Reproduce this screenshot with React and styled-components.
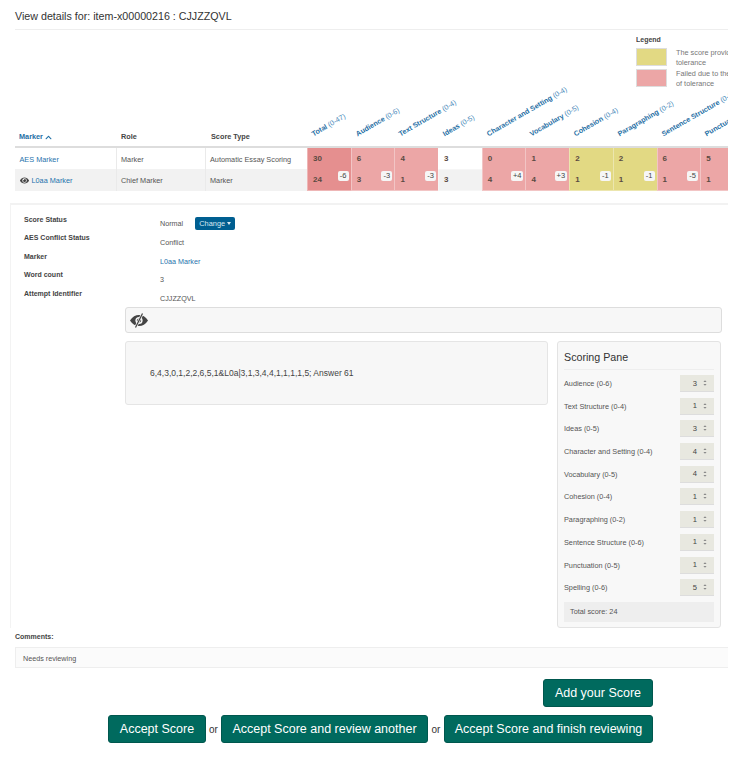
import React from 'react';
import styled, { createGlobalStyle } from 'styled-components';
import { FaEye, FaChevronUp } from 'react-icons/fa';

const Global = createGlobalStyle`
  html, body { margin: 0; padding: 0; background: #fff; }
  body { font-family: "Liberation Sans", Arial, sans-serif; color: #444; }
  * { box-sizing: border-box; }
`;

const colTemplate = '101px 89px 102px repeat(11, 43.7px)';

const Page = styled.div`
  width: 728px;
  height: 757px;
  overflow: hidden;
  padding-top: 10px;
`;
const Title = styled.h1`
  margin: 0 0 0 15px;
  height: 20px;
  font-size: 10.7px;
  line-height: 13px;
  font-weight: 400;
  color: #333;
  border-bottom: 1px solid #eee;
`;
const TableWrap = styled.div`
  margin-left: 15px;
  width: 713px;
  height: 118px;
  display: flex;
  justify-content: flex-end;
  padding-top: 5px;
  position: relative;
`;
const Legend = styled.div`
  width: 92px;
  flex: none;
  overflow: hidden;
  font-size: 7.3px;
  line-height: 10.4px;
  color: #777;
`;
const LegendTitle = styled.div`
  font-weight: 700;
  font-size: 7px;
  color: #444;
  height: 13px;
  line-height: 9px;
`;
const LegendRow = styled.div`
  display: flex;
  gap: 9px;
  height: 21px;
  width: 200px;
`;
const Swatch = styled.div`
  width: 31px;
  height: 18px;
  flex: none;
  background: ${p => p.$c};
  border: 1px solid #ddd;
`;
const HeadRow = styled.div`
  position: absolute;
  left: 0;
  right: 0;
  top: 89px;
  height: 29px;
  display: grid;
  grid-template-columns: ${colTemplate};
  border-bottom: 2px solid #ddd;
`;
const HeadText = styled.div`
  font-size: 7.3px;
  font-weight: 700;
  color: ${p => p.$link ? '#1f6fa5' : '#444'};
  padding: 9px 0 0 ${p => p.$pad || 4}px;
  display: flex;
  align-items: center;
  gap: 2px;
  height: 27px;
  line-height: 10px;
`;
const RotCell = styled.div`
  position: relative;
`;
const RotLabel = styled.span`
  position: absolute;
  left: 8px;
  bottom: 7px;
  white-space: nowrap;
  font-size: 7.15px;
  line-height: 10px;
  font-weight: 700;
  color: #1f6fa5;
  transform: rotate(-30deg);
  transform-origin: left bottom;
  em { font-style: normal; font-weight: 400; color: #3f86b8; }
`;
const Row = styled.div`
  margin-left: 15px;
  width: 760px;
  height: ${p => p.$alt ? 22 : 21}px;
  display: grid;
  grid-template-columns: ${colTemplate};
  background: ${p => p.$alt ? '#f2f2f2' : '#fff'};
`;
const Cell = styled.div`
  position: relative;
  font-size: 7.3px;
  padding-left: ${p => p.$first ? 4.5 : 4}px;
  color: #555;
  white-space: nowrap;
  border-left: ${p => p.$first ? 'none' : '1px solid #eaeaea'};
  display: flex;
  align-items: center;
  gap: 3px;
`;
const LinkText = styled.span`
  color: #1f73ad;
`;
const Score = styled.div`
  position: relative;
  background: ${p => ({ strong: '#e58f8f', red: '#eca6a6', yellow: '#e2d983' }[p.$tone] || 'transparent')};
  border-left: 1px solid rgba(255,255,255,.35);
  border-bottom: 1px solid rgba(255,255,255,.35);
  font-size: 8px;
  font-weight: 700;
  color: #5a4a42;
  padding-left: 5px;
  line-height: 21px;
`;
const Badge = styled.span`
  position: absolute;
  top: 2px;
  right: 2px;
  min-width: 11px;
  height: 10px;
  padding: 0 2px;
  background: #f6f6f6;
  border-radius: 2px;
  font-size: 7.5px;
  line-height: 10px;
  font-weight: 400;
  text-align: center;
  color: #444;
`;
const Details = styled.section`
  margin: 12px 0 0 10px;
  border-top: 2px solid #f2f2f2;
  border-left: 1px solid #f3f3f3;
  padding-top: 9px;
`;
const Facts = styled.div`
  display: flex;
  height: 93px;
`;
const FactLabels = styled.div`
  width: 149px;
  padding: 0 0 0 13px;
`;
const FactLabel = styled.div`
  height: 18.4px;
  font-size: 7px;
  font-weight: 700;
  color: #444;
  line-height: 11px;
`;
const FactValues = styled.div`
  padding-top: 4px;
`;
const FactValue = styled.div`
  height: 18.75px;
  font-size: 7.2px;
  line-height: 11px;
  color: ${p => p.$link ? '#1f73ad' : '#555'};
  display: flex;
  align-items: flex-start;
  gap: 12px;
`;
const ChangeBtn = styled.span`
  margin-top: -1px;
  background: #005f91;
  color: #dbe9f2;
  border-radius: 2px;
  width: 40px;
  height: 13px;
  font-size: 7.4px;
  line-height: 13px;
  text-align: center;
  &::after {
    content: "";
    display: inline-block;
    margin-left: 2px;
    vertical-align: 1px;
    border-top: 3px solid #dbe9f2;
    border-left: 2.5px solid transparent;
    border-right: 2.5px solid transparent;
  }
`;
const EyeBar = styled.div`
  margin-left: 114px;
  width: 597px;
  height: 26px;
  background: #f7f7f7;
  border: 1px solid #ddd;
  border-radius: 3px;
  display: flex;
  align-items: center;
  padding-left: 4px;
  color: #444;
`;
const EyeSlash = styled.svg`
  width: 18px;
  height: 15px;
`;
const Columns = styled.div`
  margin: 8px 0 0 114px;
  display: flex;
  align-items: flex-start;
  gap: 9px;
`;
const Answer = styled.div`
  width: 423px;
  height: 64px;
  background: #f7f7f7;
  border: 1px solid #e5e5e5;
  border-radius: 3px;
  padding: 26px 0 0 24px;
  font-size: 8.5px;
  line-height: 11px;
  color: #444;
`;
const Pane = styled.aside`
  width: 164px;
  height: 287px;
  background: #f8f8f8;
  border: 1px solid #e3e3e3;
  border-radius: 3px;
  padding: 9px 6px 0;
`;
const PaneTitle = styled.h2`
  margin: 0;
  font-size: 10.7px;
  line-height: 13px;
  font-weight: 400;
  color: #333;
  padding-bottom: 5px;
  border-bottom: 1px solid #eee;
  height: 19px;
`;
const PaneRows = styled.div`
  padding-top: 5px;
`;
const PaneRow = styled.div`
  height: 22.7px;
  display: flex;
  align-items: flex-start;
  justify-content: space-between;
  font-size: 7.3px;
  color: #555;
  line-height: 17px;
`;
const Spin = styled.div`
  width: 34px;
  height: 17px;
  background: #e8e8e0;
  border-bottom: 1px solid #ddd;
  display: flex;
  justify-content: flex-end;
  align-items: center;
  gap: 6px;
  padding-right: 7px;
  font-size: 7.6px;
  color: #444;
`;
const Arrows = styled.svg`
  width: 4px;
  height: 8px;
  fill: #888;
`;
const Total = styled.div`
  height: 20px;
  background: #eee;
  padding-left: 6px;
  font-size: 7.3px;
  line-height: 19px;
  color: #555;
`;
const CommentsLabel = styled.div`
  margin: 3px 0 0 15px;
  font-size: 7px;
  line-height: 11px;
  font-weight: 700;
  color: #444;
`;
const Comments = styled.div`
  margin: 5px 0 0 15px;
  height: 21px;
  background: #fbfbfb;
  border: 1px solid #eee;
  border-right: none;
  padding-left: 7px;
  font-size: 7.2px;
  line-height: 22px;
  color: #555;
`;
const Actions = styled.div`
  margin-top: 11px;
  width: 653px;
  display: flex;
  flex-direction: column;
  align-items: flex-end;
  gap: 8px;
`;
const ActionRow = styled.div`
  display: flex;
  align-items: center;
  font-size: 10px;
  color: #333;
`;
const Or = styled.span`
  width: ${p => p.$w}px;
  text-align: center;
`;
const Btn = styled.button`
  height: 28px;
  width: ${p => p.$w}px;
  padding: 0;
  border: 1px solid #00574e;
  border-radius: 3px;
  background: #006a5e;
  color: #fff;
  font-family: "Liberation Sans", Arial, sans-serif;
  font-size: 12.5px;
`;

const cols = ['Total (0-47)', 'Audience (0-6)', 'Text Structure (0-4)', 'Ideas (0-5)', 'Character and Setting (0-4)', 'Vocabulary (0-5)', 'Cohesion (0-4)', 'Paragraphing (0-2)', 'Sentence Structure (0-6)', 'Punctuation (0-5)'];
const first = [['30', 'strong'], ['6', 'red'], ['4', 'red'], ['3', ''], ['0', 'red'], ['1', 'red'], ['2', 'yellow'], ['2', 'yellow'], ['6', 'red'], ['5', 'red']];
const second = [['24', 'strong', '-6'], ['3', 'red', '-3'], ['1', 'red', '-3'], ['3', ''], ['4', 'red', '+4'], ['4', 'red', '+3'], ['1', 'yellow', '-1'], ['1', 'yellow', '-1'], ['1', 'red', '-5'], ['1', 'red']];
const pane = [['Audience (0-6)', 3], ['Text Structure (0-4)', 1], ['Ideas (0-5)', 3], ['Character and Setting (0-4)', 4], ['Vocabulary (0-5)', 4], ['Cohesion (0-4)', 1], ['Paragraphing (0-2)', 1], ['Sentence Structure (0-6)', 1], ['Punctuation (0-5)', 1], ['Spelling (0-6)', 5]];

const Rot = ({ text }) => {
  const i = text.lastIndexOf(' ');
  return <RotCell><RotLabel>{text.slice(0, i)} <em>{text.slice(i + 1)}</em></RotLabel></RotCell>;
};

export default function App() {
  return (
    <Page>
      <Global />
      <Title>View details for: item-x00000216 : CJJZZQVL</Title>
      <TableWrap>
        <Legend>
          <LegendTitle>Legend</LegendTitle>
          <LegendRow><Swatch $c="#e2d983" /><div>The score provided is within<br />tolerance</div></LegendRow>
          <LegendRow><Swatch $c="#eca6a6" /><div>Failed due to the score being out<br />of tolerance</div></LegendRow>
        </Legend>
        <HeadRow>
          <HeadText $link>Marker <FaChevronUp size={7} /></HeadText>
          <HeadText $pad={5}>Role</HeadText>
          <HeadText $pad={6}>Score Type</HeadText>
          {cols.map(c => <Rot key={c} text={c} />)}
        </HeadRow>
      </TableWrap>
      <div>
        <Row>
          <Cell $first><LinkText>AES Marker</LinkText></Cell>
          <Cell>Marker</Cell>
          <Cell>Automatic Essay Scoring</Cell>
          {first.map(([v, t], i) => <Score key={i} $tone={t}>{v}</Score>)}
        </Row>
        <Row $alt>
          <Cell $first><FaEye size={9} color="#444" /><LinkText>L0aa Marker</LinkText></Cell>
          <Cell>Chief Marker</Cell>
          <Cell>Marker</Cell>
          {second.map(([v, t, b], i) => <Score key={i} $tone={t}>{v}{b && <Badge>{b}</Badge>}</Score>)}
        </Row>
      </div>
      <Details>
        <Facts>
          <FactLabels>
            <FactLabel>Score Status</FactLabel>
            <FactLabel>AES Conflict Status</FactLabel>
            <FactLabel>Marker</FactLabel>
            <FactLabel>Word count</FactLabel>
            <FactLabel>Attempt Identifier</FactLabel>
          </FactLabels>
          <FactValues>
            <FactValue>Normal <ChangeBtn>Change</ChangeBtn></FactValue>
            <FactValue>Conflict</FactValue>
            <FactValue $link>L0aa Marker</FactValue>
            <FactValue>3</FactValue>
            <FactValue>CJJZZQVL</FactValue>
          </FactValues>
        </Facts>
        <EyeBar>
          <EyeSlash viewBox="0 0 18 15">
            <path fill="#444" d="M0 7.5C2.5 3.5 5.5 2 9 2s6.500 1.500 9 5.500C15.500 11.500 12.500 13 9 13S2.500 11.500 0 7.500z" />
            <circle cx="9" cy="7.5" r="3.600" fill="#f7f7f7" />
            <circle cx="9" cy="7.500" r="2.100" fill="#444" />
            <path d="M12.500 0.500 5.500 14.500" stroke="#f7f7f7" strokeWidth="2.600" />
            <path d="M12.500 0.500 5.500 14.500" stroke="#444" strokeWidth="1.300" />
          </EyeSlash>
        </EyeBar>
        <Columns>
          <Answer>6,4,3,0,1,2,2,6,5,1&amp;L0a|3,1,3,4,4,1,1,1,1,5; Answer 61</Answer>
          <Pane>
            <PaneTitle>Scoring Pane</PaneTitle>
            <PaneRows>
              {pane.map(([l, v]) => (
                <PaneRow key={l}>
                  <span>{l}</span>
                  <Spin>{v}<Arrows viewBox="0 0 5 9"><path d="M2.5 1 4.500 3.300H.5zM2.500 8 .5 5.700h4z" /></Arrows></Spin>
                </PaneRow>
              ))}
            </PaneRows>
            <Total>Total score: 24</Total>
          </Pane>
        </Columns>
      </Details>
      <CommentsLabel>Comments:</CommentsLabel>
      <Comments>Needs reviewing</Comments>
      <Actions>
        <Btn $w={110}>Add your Score</Btn>
        <ActionRow>
          <Btn $w={98}>Accept Score</Btn><Or $w={15}>or</Or>
          <Btn $w={207}>Accept Score and review another</Btn><Or $w={16}>or</Or>
          <Btn $w={209}>Accept Score and finish reviewing</Btn>
        </ActionRow>
      </Actions>
    </Page>
  );
}
